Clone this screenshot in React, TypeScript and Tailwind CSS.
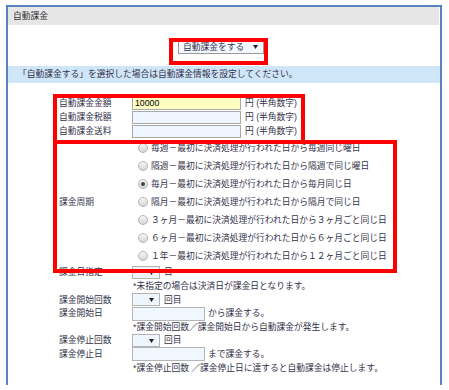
import React from 'react';

const font = 'font-["Liberation_Sans","Noto_Sans_CJK_JP",sans-serif]';

const Caret = () => (
  <svg width="5" height="4" viewBox="0 0 5 4" className="shrink-0">
    <path d="M0 0 L5 0 L2.5 4 Z" fill="#222" />
  </svg>
);

const MiniSelect = () => (
  <div className="w-[28px] h-[13px] border border-[#b4b4b4] bg-[#eef5fd] flex items-center justify-end pr-[5px]">
    <Caret />
  </div>
);

const Row = ({ label, children, h = 'h-[14px]' }: { label?: string; children: React.ReactNode; h?: string }) => (
  <div className={`flex items-center ${h}`}>
    <div className="w-[73px] shrink-0 whitespace-nowrap">{label}</div>
    <div className="flex items-center whitespace-nowrap">{children}</div>
  </div>
);

const cycles = [
  '毎週－最初に決済処理が行われた日から毎週同じ曜日',
  '隔週－最初に決済処理が行われた日から隔週で同じ曜日',
  '毎月－最初に決済処理が行われた日から毎月同じ日',
  '隔月－最初に決済処理が行われた日から隔月で同じ日',
  '３ヶ月－最初に決済処理が行われた日から３ヶ月ごと同じ日',
  '６ヶ月－最初に決済処理が行われた日から６ヶ月ごと同じ日',
  '１年－最初に決済処理が行われた日から１２ヶ月ごと同じ日',
];

export default function App() {
  return (
    <div className={`relative w-[449px] h-[390px] bg-white text-[8.75px] leading-none text-[#33334a] ${font}`}>
      <div className="ml-[6px] mt-[5px] w-[436px] h-[380px] border-2 border-b-0 border-[#5a82bd]">
        {/* Header */}
        <div className="h-[18px] bg-[#e6e6e6] mr-[1px] pl-[5px] flex items-center text-[#333]">自動課金</div>

        {/* Mode select */}
        <div className="pt-[15px] pb-[12px] pl-[170px]">
          <div className="w-[86px] h-[14px] border border-[#9a9a9a] bg-[#f3f8ff] flex items-center justify-between pl-[4px] pr-[5px]">
            <span>自動課金をする</span>
            <Caret />
          </div>
        </div>

        {/* Info band */}
        <div className="h-[17px] bg-[#cfe5f8] pl-[10px] flex items-center">
          「自動課金する」を選択した場合は自動課金情報を設定してください。
        </div>

        {/* Form */}
        <div className="pt-[13px] pl-[51px]">
          <Row label="自動課金金額">
            <div className="w-[109px] h-[13px] border border-[#a8a8a8] bg-[#ffffc2] flex items-center pl-[2px] text-black">10000</div>
            <span className="ml-[4px]">円 (半角数字)</span>
          </Row>
          <Row label="自動課金税額">
            <div className="w-[109px] h-[13px] border border-[#a8a8a8] bg-[#eff6ff]" />
            <span className="ml-[4px]">円 (半角数字)</span>
          </Row>
          <Row label="自動課金送料">
            <div className="w-[109px] h-[13px] border border-[#a8a8a8] bg-[#eff6ff]" />
            <span className="ml-[4px]">円 (半角数字)</span>
          </Row>

          {/* Billing cycle */}
          <div className="flex mt-[1px]">
            <div className="w-[73px] shrink-0 flex items-center">課金周期</div>
            <div className="flex flex-col pl-[6px]">
              {cycles.map((c, i) => (
                <div key={c} className="h-[18px] flex items-center whitespace-nowrap">
                  <span className="w-[10px] h-[10px] rounded-full border border-[#b3b3b3] bg-gradient-to-b from-[#f7f7f7] to-[#d6d6d6] flex items-center justify-center shrink-0">
                    {i === 2 && <span className="w-[4px] h-[4px] rounded-full bg-[#444]" />}
                  </span>
                  <span className="ml-[3px]">{c}</span>
                </div>
              ))}
            </div>
          </div>

          {/* Schedule */}
          <div className="mt-[1px]">
            <Row label="課金日指定" h="h-[13.6px]">
              <MiniSelect />
              <span className="ml-[4px]">日</span>
            </Row>
            <Row h="h-[13.6px]">
              <span className="pl-[1px]">*未指定の場合は決済日が課金日となります。</span>
            </Row>
            <Row label="課金開始回数" h="h-[13.6px]">
              <MiniSelect />
              <span className="ml-[4px]">回目</span>
            </Row>
            <Row label="課金開始日" h="h-[13.6px]">
              <div className="w-[73px] h-[14px] border border-[#b4b4b4] bg-[#f0f7ff]" />
              <span className="ml-[3px]">から課金する。</span>
            </Row>
            <Row h="h-[13.6px]">
              <span className="pl-[1px]">*課金開始回数／課金開始日から自動課金が発生します。</span>
            </Row>
            <Row label="課金停止回数" h="h-[13.6px]">
              <MiniSelect />
              <span className="ml-[4px]">回目</span>
            </Row>
            <Row label="課金停止日" h="h-[13.6px]">
              <div className="w-[73px] h-[14px] border border-[#b4b4b4] bg-[#f0f7ff]" />
              <span className="ml-[3px]">まで課金する。</span>
            </Row>
            <Row h="h-[13.6px]">
              <span className="pl-[1px]">*課金停止回数 ／課金停止日に達すると自動課金は停止します。</span>
            </Row>
          </div>
        </div>
      </div>

      {/* Red highlight annotations */}
      <div className="absolute left-[169px] top-[33px] w-[99px] h-[27px] border-4 border-[#ff0000]" />
      <div className="absolute left-[53px] top-[89px] w-[252px] h-[50px] border-4 border-[#ff0000]" />
      <div className="absolute left-[53px] top-[135px] w-[344px] h-[133px] border-4 border-[#ff0000]" />
    </div>
  );
}
